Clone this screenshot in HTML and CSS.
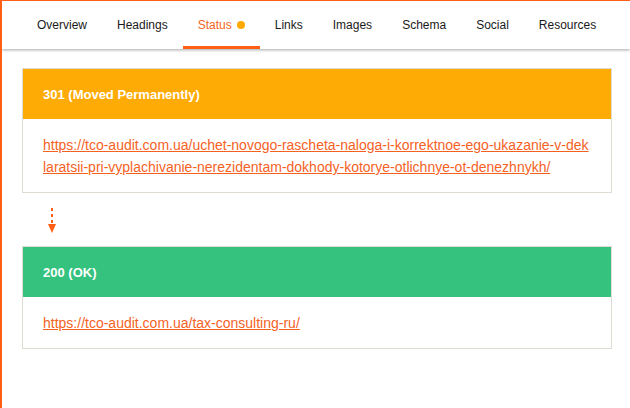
FILE: index.html
```html
<!DOCTYPE html>
<html>
<head>
<meta charset="utf-8">
<link rel="stylesheet" href="styles.css">
</head>
<body>
<div class="page">
  <nav class="tabs">
    <a class="tab">Overview</a>
    <a class="tab">Headings</a>
    <a class="tab active">Status <span class="dot"></span></a>
    <a class="tab">Links</a>
    <a class="tab">Images</a>
    <a class="tab">Schema</a>
    <a class="tab">Social</a>
    <a class="tab">Resources</a>
  </nav>
  <main class="content">
    <section class="card">
      <div class="card-head redirect">301 (Moved Permanently)</div>
      <div class="card-body"><a class="url" href="#">https://tco-audit.com.ua/uchet-novogo-rascheta-naloga-i-korrektnoe-ego-ukazanie-v-deklaratsii-pri-vyplachivanie-nerezidentam-dokhody-kotorye-otlichnye-ot-denezhnykh/</a></div>
    </section>
    <div class="arrow">
      <svg width="8" height="25" viewBox="0 0 8 25">
        <line x1="4" y1="0" x2="4" y2="18" stroke="#ff5f14" stroke-width="2" stroke-dasharray="3 3"/>
        <polygon points="0,16 8,16 4,25" fill="#ff5f14"/>
      </svg>
    </div>
    <section class="card">
      <div class="card-head ok">200 (OK)</div>
      <div class="card-body"><a class="url" href="#">https://tco-audit.com.ua/tax-consulting-ru/</a></div>
    </section>
  </main>
</div>
</body>
</html>
```
FILE: styles.css
```css
html, body {
  margin: 0;
  padding: 0;
  background: #fff;
}
body {
  font-family: "Liberation Sans", Arial, sans-serif;
}
.page {
  height: 408px;
  box-sizing: border-box;
  border-left: 2px solid #ff5f14;
  border-top: 1px solid #ff5f14;
  overflow: hidden;
}
.tabs {
  display: flex;
  height: 48px;
  padding-left: 20px;
  background: #fff;
  box-shadow: 0 1px 3px rgba(0, 0, 0, 0.35);
  position: relative;
}
.tab {
  display: flex;
  align-items: center;
  padding: 3px 15px 0;
  font-size: 12px;
  color: #1a1a1a;
  border-bottom: 3px solid transparent;
  line-height: 42px;
  cursor: pointer;
}
.tab.active {
  color: #f26522;
  border-bottom-color: #ff5f14;
}
.dot {
  display: inline-block;
  width: 8px;
  height: 8px;
  border-radius: 50%;
  background: #ffaa00;
  margin-left: 5px;
}
.content {
  padding: 19px 18px 0 20px;
}
.card {
  border: 1px solid #e0dcd4;
}
.card-head {
  height: 50px;
  display: flex;
  align-items: center;
  padding: 0 20px;
  font-size: 13px;
  font-weight: bold;
  color: #fff;
}
.card-head.redirect {
  background: #ffab05;
}
.card-head.ok {
  background: #34c27e;
}
.card-body {
  padding: 15px 20px 14px;
  font-size: 14px;
  line-height: 22px;
  word-break: break-all;
}
.url {
  color: #f5621f;
  text-decoration: underline;
}
.arrow {
  padding: 15px 0 13px 26px;
  line-height: 0;
}
```
